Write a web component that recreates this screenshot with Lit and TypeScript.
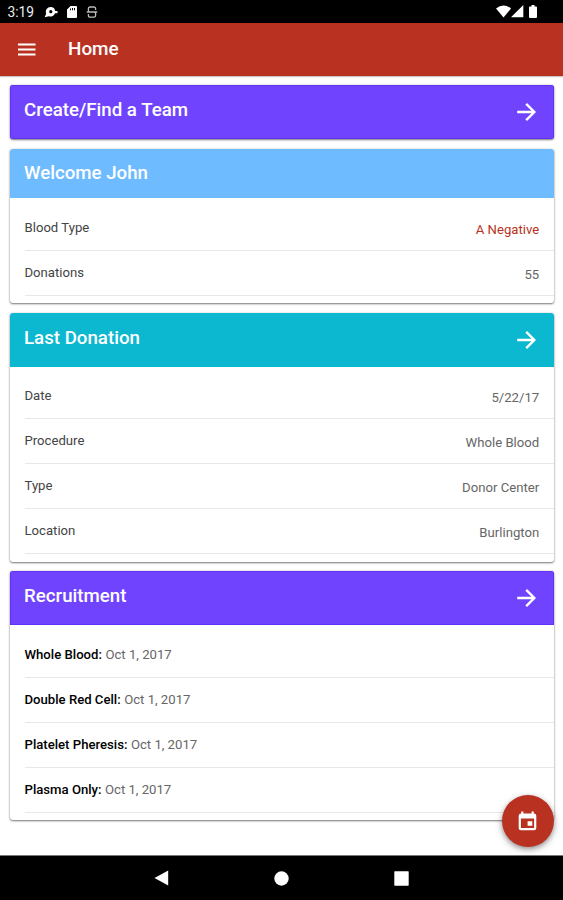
import { LitElement, html, svg, css, nothing } from "lit";
import { customElement, property } from "lit/decorators.js";

interface Row {
  label: string;
  value: string;
  accent?: boolean;
}

const lastDonation: Row[] = [
  { label: "Date", value: "5/22/17" },
  { label: "Procedure", value: "Whole Blood" },
  { label: "Type", value: "Donor Center" },
  { label: "Location", value: "Burlington" },
];

const welcome: Row[] = [
  { label: "Blood Type", value: "A Negative", accent: true },
  { label: "Donations", value: "55" },
];

const recruitment: Row[] = [
  { label: "Whole Blood:", value: "Oct 1, 2017" },
  { label: "Double Red Cell:", value: "Oct 1, 2017" },
  { label: "Platelet Pheresis:", value: "Oct 1, 2017" },
  { label: "Plasma Only:", value: "Oct 1, 2017" },
];

const icon = (w: number, h: number, box: string, body: unknown) =>
  html`<svg width=${w} height=${h} viewBox=${box} fill="#fff" aria-hidden="true">${body}</svg>`;

@customElement("info-card")
class InfoCard extends LitElement {
  @property() heading = "";
  @property() tone = "violet";
  @property({ type: Boolean }) arrow = false;
  @property({ type: Boolean }) inline = false;
  @property({ attribute: false }) rows: Row[] = [];

  static styles = css`
    :host {
      display: block;
      border-radius: 3px;
      background: #fff;
      overflow: hidden;
      box-shadow: 0 1px 2px rgba(0, 0, 0, 0.5), 0 0 3px rgba(0, 0, 0, 0.12);
    }
    .head {
      box-sizing: border-box;
      display: flex;
      justify-content: space-between;
      align-items: center;
      height: 49.5px;
      padding: 0 17.8px 0 14.5px;
      color: #fff;
    }
    .head.arrow {
      height: 54px;
    }
    .head.violet {
      background: #7044ff;
      box-shadow: inset 0 0 0 1px #6232f6;
    }
    .head.sky {
      background: #6ebbff;
    }
    .head.teal {
      background: #0bb8cf;
    }
    h2 {
      margin: 0;
      font: 500 18.7px/24px Roboto, sans-serif;
    }
    .arrow h2 {
      margin-bottom: 4px;
    }
    .head svg {
      display: block;
    }
    ul {
      list-style: none;
      margin: 0;
      padding: 7.5px 0;
    }
    li {
      box-sizing: border-box;
      display: flex;
      justify-content: space-between;
      height: 45px;
      margin-left: 15px;
      padding-right: 14.8px;
      border-bottom: 1.5px solid #e8e8e8;
      font: 400 13.15px/18px Roboto, sans-serif;
      color: #444;
    }
    .label {
      padding-top: 13px;
    }
    .value {
      padding-top: 15px;
      color: #666;
    }
    .accent {
      color: #b93221;
    }
    .inline li {
      justify-content: flex-start;
      gap: 3.5px;
    }
    .inline .label {
      font-weight: 500;
      color: #000;
    }
    .inline .value {
      padding-top: 13px;
    }
  `;

  render() {
    return html`
      <div class="head ${this.tone} ${this.arrow ? "arrow" : ""}">
        <h2>${this.heading}</h2>
        ${this.arrow
          ? icon(20, 20, "0 0 20 20", svg`<path d="M1.2 10H18M10.2 1.8L18.4 10L10.2 18.2" fill="none" stroke="#fff" stroke-width="2.4"/>`)
          : nothing}
      </div>
      ${this.rows.length
        ? html`<ul class=${this.inline ? "inline" : ""}>
            ${this.rows.map(
              (r) => html`<li>
                <span class="label">${r.label}</span>
                <span class="value ${r.accent ? "accent" : ""}">${r.value}</span>
              </li>`
            )}
          </ul>`
        : nothing}
    `;
  }
}

@customElement("app-root")
class AppRoot extends LitElement {
  static styles = css`
    :host {
      position: relative;
      display: flex;
      flex-direction: column;
      height: 900px;
      overflow: hidden;
      background: #fff;
      font-family: Roboto, sans-serif;
    }
    svg {
      display: block;
    }
    .status {
      box-sizing: border-box;
      display: flex;
      align-items: center;
      flex: none;
      height: 23px;
      padding: 0 26px 0 7.5px;
      background: #000;
      color: #eee;
      font-size: 13.8px;
      line-height: 22px;
    }
    .time {
      width: 36.5px;
    }
    .left {
      display: flex;
      align-items: center;
      gap: 8px;
      flex: 1;
    }
    .right {
      display: flex;
      align-items: center;
      padding-bottom: 1px;
    }
    .battery {
      margin-left: 5px;
    }
    header {
      box-sizing: border-box;
      display: flex;
      align-items: center;
      gap: 32px;
      flex: none;
      height: 52.5px;
      padding-left: 18px;
      background: #b93221;
      color: #fff;
      box-shadow: 0 1px 1px rgba(0, 0, 0, 0.22);
    }
    h1 {
      margin: 0;
      font-size: 18.9px;
      line-height: 24px;
      font-weight: 500;
    }
    main {
      display: flex;
      flex-direction: column;
      flex: 1;
      gap: 9.5px;
      padding: 9.5px 9px 0 9.5px;
    }
    .fab {
      position: absolute;
      right: 9px;
      bottom: 53px;
      display: grid;
      place-items: center;
      width: 52px;
      height: 52px;
      padding: 0 1px 0 0;
      border: 0;
      border-radius: 50%;
      background: #b93221;
      box-shadow: 0 2px 5px rgba(0, 0, 0, 0.35), 0 3px 10px rgba(0, 0, 0, 0.14);
    }
    nav {
      box-sizing: border-box;
      display: flex;
      justify-content: center;
      align-items: center;
      flex: none;
      gap: 105px;
      height: 45px;
      border-top: 1px solid #777;
      background: #000;
    }
  `;

  render() {
    return html`
      <div class="status">
        <span class="time">3:19</span>
        <div class="left">
          ${icon(14, 12, "0 0 14 12", svg`<path fill-rule="evenodd" d="M6.6 1A4.7 4.7 0 0 1 11.2 5H13.5V7.2H11A4.7 4.7 0 0 1 5 10.2L.7 11.3L2.2 7.5A4.7 4.7 0 0 1 6.6 1ZM6.8 4.1A1.6 1.6 0 1 0 6.8 7.3A1.6 1.6 0 0 0 6.8 4.1Z"/>`)}
          ${icon(12, 12, "0 0 12 12", svg`<path fill-rule="evenodd" d="M4.5 0H10Q11 0 11 1V11Q11 12 10 12H2Q1 12 1 11V3.5ZM4 2.6V4.2H5V2.6ZM6 2V4.2H7V2ZM8 2V4.2H9V2Z"/>`)}
          ${icon(12, 12, "0 0 12 12", svg`<path d="M9.6 4V2.5Q9.6 1 8 1H4Q2.4 1 2.4 2.5V4.5Q2.4 6 4 6H8Q9.6 6 9.6 7.5V9.5Q9.6 11.2 8 11.2H4Q2.4 11.2 2.4 9.5V8M.8 6H11.2" fill="none" stroke="#bbb" stroke-width="1.3"/>`)}
        </div>
        <div class="right">
          ${icon(15, 13, "0 0 15 13", svg`<path d="M0 3.5Q7.5 -2.5 15 3.5L7.5 12.6Z"/>`)}
          ${icon(13, 13, "0 0 13 13", svg`<path d="M12.3 0V12.3H0Z"/>`)}
          <span class="battery">${icon(8, 13, "0 0 8 13", svg`<path d="M2.5 0H5.5V1.4H7Q8 1.4 8 2.4V12Q8 13 7 13H1Q0 13 0 12V2.4Q0 1.4 1 1.4H2.5Z"/>`)}</span>
        </div>
      </div>
      <header>
        ${icon(18, 13, "0 0 18 13", svg`<path d="M0 .4H17.5V2.4H0ZM0 5.5H17.5V7.5H0ZM0 10.6H17.5V12.6H0Z"/>`)}
        <h1>Home</h1>
      </header>
      <main>
        <info-card heading="Create/Find a Team" arrow></info-card>
        <info-card heading="Welcome John" tone="sky" .rows=${welcome}></info-card>
        <info-card heading="Last Donation" tone="teal" arrow .rows=${lastDonation}></info-card>
        <info-card heading="Recruitment" arrow inline .rows=${recruitment}></info-card>
      </main>
      <button class="fab" aria-label="Schedule">
        ${icon(19, 20, "0 0 19 20", svg`<path fill-rule="evenodd" d="M3.2 .5H5.4V2.5H13.6V.5H15.8V2.5Q18.3 2.5 18.3 4.8V17Q18.3 19.2 16 19.2H3Q.7 19.2 .7 17V4.8Q.7 2.5 3.2 2.5ZM2.9 7.6V17H16.1V7.6ZM9.6 10.2H14.3V14.8H9.6Z"/>`)}
      </button>
      <nav>
        ${icon(15, 16, "0 0 15 16", svg`<path d="M14.2 .4V15.6L.5 8Z"/>`)}
        ${icon(15, 15, "0 0 15 15", svg`<circle cx="7.5" cy="7.5" r="7.2"/>`)}
        ${icon(15, 15, "0 0 15 15", svg`<rect x=".3" y=".3" width="14.4" height="14.4" rx=".6"/>`)}
      </nav>
    `;
  }
}
